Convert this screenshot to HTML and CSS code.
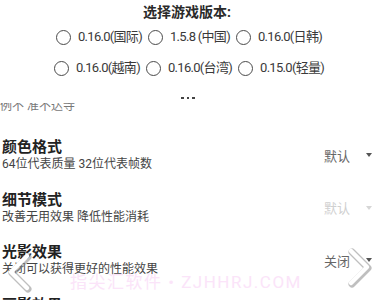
FILE: index.html
```html
<!DOCTYPE html>
<html lang="zh">
<head>
<meta charset="utf-8">
<link rel="stylesheet" href="styles.css">
</head>
<body>
<div class="screen">
  <section class="picker">
    <h1 class="picker-title">选择游戏版本:</h1>
    <div class="opt-row">
      <label class="opt"><span class="radio"></span>0.16.0(国际)</label>
      <label class="opt"><span class="radio"></span>1.5.8 (中国)</label>
      <label class="opt"><span class="radio"></span>0.16.0(日韩)</label>
    </div>
    <div class="opt-row">
      <label class="opt"><span class="radio"></span>0.16.0(越南)</label>
      <label class="opt"><span class="radio"></span>0.16.0(台湾)</label>
      <label class="opt"><span class="radio"></span>0.15.0(轻量)</label>
    </div>
    <div class="more"><i></i><i></i><i></i></div>
  </section>

  <section class="settings">
    <div class="partial"><p class="sub">例不 准不达寺</p></div>
    <div class="setting">
      <div class="info">
        <div class="name">颜色格式</div>
        <div class="sub">64位代表质量 32位代表帧数</div>
      </div>
      <div class="select"><span>默认</span><b class="caret"></b></div>
    </div>
    <div class="setting">
      <div class="info">
        <div class="name">细节模式</div>
        <div class="sub">改善无用效果 降低性能消耗</div>
      </div>
      <div class="select disabled"><span>默认</span><b class="caret"></b></div>
    </div>
    <div class="setting">
      <div class="info">
        <div class="name">光影效果</div>
        <div class="sub">关闭可以获得更好的性能效果</div>
      </div>
      <div class="select"><span>关闭</span><b class="caret"></b></div>
    </div>
    <div class="setting">
      <div class="info">
        <div class="name">画影效果</div>
        <div class="sub">关闭可以获得更好的性能效果</div>
      </div>
    </div>
  </section>

  <div class="watermark">指尖汇软件 • ZJHHRJ.COM</div>

  <svg class="nav nav-left" width="30" height="44" viewBox="0 0 30 44">
    <polyline points="22,5 6,21 22,37" fill="none" stroke="#8a8a8a" stroke-width="7" stroke-linecap="round" stroke-linejoin="round" opacity="0.55"/>
    <polyline points="21,4 5,20 21,36" fill="none" stroke="#ffffff" stroke-width="4.5" stroke-linecap="round" stroke-linejoin="round"/>
  </svg>
  <svg class="nav nav-right" width="30" height="44" viewBox="0 0 30 44">
    <polyline points="8,5 24,21 8,37" fill="none" stroke="#8a8a8a" stroke-width="7" stroke-linecap="round" stroke-linejoin="round" opacity="0.55"/>
    <polyline points="7,4 23,20 7,36" fill="none" stroke="#ffffff" stroke-width="4.5" stroke-linecap="round" stroke-linejoin="round"/>
  </svg>
</div>
</body>
</html>
```

FILE: styles.css
```css
* { box-sizing: border-box; margin: 0; padding: 0; }

html, body {
  width: 374px;
  height: 300px;
  background: #ffffff;
  overflow: hidden;
}

body {
  font-family: "Roboto", "Noto Sans CJK SC", sans-serif;
  color: #333;
}

.screen {
  position: relative;
  width: 374px;
  height: 300px;
  overflow: hidden;
}

.picker {
  height: 103px;
  padding-top: 3px;
  display: flex;
  flex-direction: column;
  align-items: center;
}

.picker-title {
  font-size: 14px;
  line-height: 18px;
  font-weight: 700;
  color: #2a2a2a;
}

.opt-row {
  display: flex;
  justify-content: center;
  gap: 6px;
  height: 20px;
  margin-top: 6px;
  padding-left: 4px;
}

.opt-row + .opt-row {
  margin-top: 11px;
}

.opt {
  display: flex;
  align-items: center;
  gap: 7px;
  font-size: 13px;
  letter-spacing: -0.7px;
  line-height: 20px;
  color: #3a3a3a;
  white-space: nowrap;
}

.radio {
  width: 15px;
  height: 15px;
  border: 1.6px solid #4a4a4a;
  border-radius: 50%;
  flex: none;
}

.more {
  display: flex;
  gap: 3px;
  margin-top: 18px;
  height: 4px;
  align-items: center;
  padding-left: 2px;
}

.more i {
  width: 2.5px;
  height: 2.5px;
  background: #444;
  display: block;
}

.settings {
  height: 197px;
  overflow: hidden;
}

.partial {
  height: 26px;
  overflow: hidden;
}

.partial .sub {
  margin-top: -5px;
  color: #777;
}

.setting {
  height: 52.5px;
  display: flex;
  align-items: center;
  justify-content: space-between;
  padding: 0 2px 0 2px;
}

.name {
  font-size: 15px;
  line-height: 18px;
  font-weight: 700;
  color: #222;
}

.sub {
  font-size: 12px;
  line-height: 16px;
  color: #444;
  white-space: nowrap;
}

.select {
  display: flex;
  align-items: center;
  gap: 16px;
  font-size: 13px;
  color: #666;
}

.select.disabled {
  color: #d0d0d0;
}

.caret {
  width: 0;
  height: 0;
  border-left: 3.5px solid transparent;
  border-right: 3.5px solid transparent;
  border-top: 4px solid #555;
}

.select.disabled .caret {
  border-top-color: #d6d6d6;
}

.watermark {
  position: absolute;
  left: 70px;
  top: 272px;
  font-size: 17px;
  line-height: 20px;
  letter-spacing: 1.5px;
  color: #fbe4f9;
  white-space: nowrap;
  pointer-events: none;
}

.nav {
  position: absolute;
}

.nav-left {
  left: 6px;
  top: 252px;
}

.nav-right {
  left: 344px;
  top: 247px;
}
```
